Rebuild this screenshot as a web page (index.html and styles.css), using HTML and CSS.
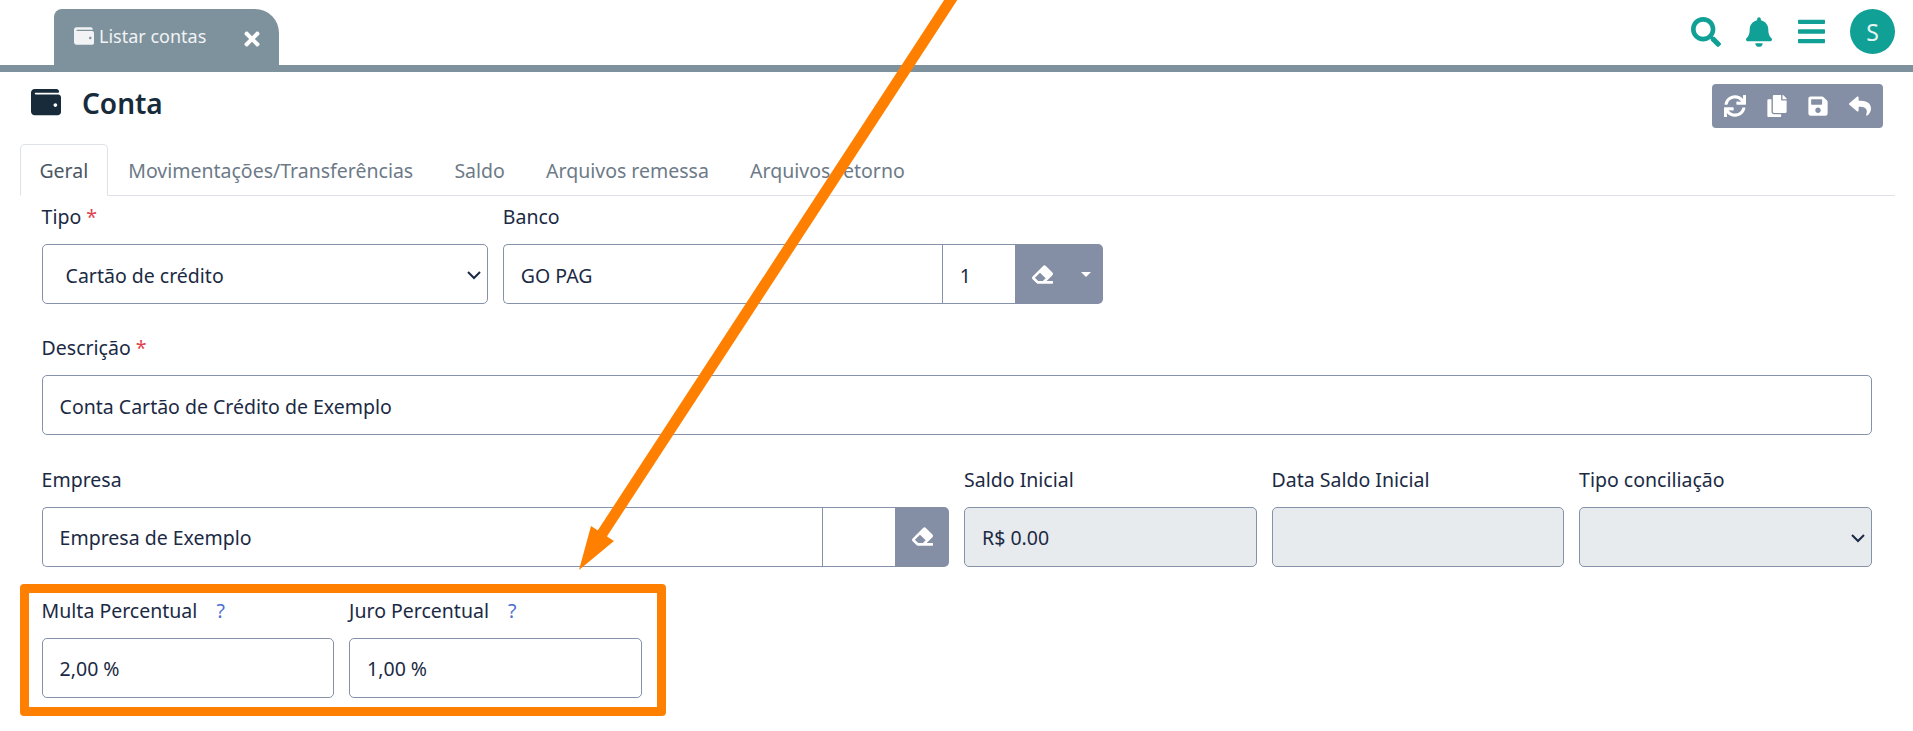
FILE: index.html
```html
<!DOCTYPE html>
<html lang="pt-BR">
<head>
<meta charset="utf-8"/>
<title>Conta</title>
<link rel="stylesheet" href="styles.css">
</head>
<body>
<svg class="sprite" width="0" height="0">
  <symbol id="i-wallet" viewBox="0 0 512 512"><path d="M461.2 128H80c-8.84 0-16-7.16-16-16s7.16-16 16-16h384c8.84 0 16-7.16 16-16 0-26.51-21.49-48-48-48H64C28.65 32 0 60.65 0 96v320c0 35.35 28.65 64 64 64h397.2c28.02 0 50.8-21.53 50.8-48V176c0-26.47-22.78-48-50.8-48zM416 340c-17.67 0-32-14.33-32-32s14.33-32 32-32 32 14.33 32 32-14.33 32-32 32z"/></symbol>
  <symbol id="i-times" viewBox="0 0 352 512"><path d="M242.72 256l100.07-100.07c12.28-12.28 12.28-32.19 0-44.48l-22.24-22.24c-12.28-12.28-32.19-12.28-44.48 0L176 189.28 75.93 89.21c-12.28-12.28-32.19-12.28-44.48 0L9.21 111.45c-12.28 12.28-12.28 32.19 0 44.48L109.28 256 9.21 356.07c-12.28 12.28-12.28 32.19 0 44.48l22.24 22.24c12.28 12.28 32.2 12.28 44.48 0L176 322.72l100.07 100.07c12.28 12.28 32.2 12.28 44.48 0l22.24-22.24c12.28-12.28 12.28-32.19 0-44.48L242.72 256z"/></symbol>
  <symbol id="i-search" viewBox="0 0 512 512"><path d="M505 442.7L405.3 343c-4.5-4.5-10.6-7-17-7H372c27.6-35.3 44-79.7 44-128C416 93.1 322.9 0 208 0S0 93.1 0 208s93.1 208 208 208c48.3 0 92.7-16.4 128-44v16.3c0 6.4 2.5 12.5 7 17l99.7 99.7c9.4 9.4 24.6 9.4 33.9 0l28.3-28.3c9.4-9.4 9.4-24.6.1-34zM208 336c-70.7 0-128-57.2-128-128 0-70.7 57.2-128 128-128 70.7 0 128 57.2 128 128 0 70.7-57.2 128-128 128z"/></symbol>
  <symbol id="i-bell" viewBox="0 0 448 512"><path d="M224 512c35.32 0 63.97-28.65 63.97-64H160.03c0 35.35 28.65 64 63.97 64zm215.39-149.71c-19.32-20.76-55.47-51.99-55.47-154.29 0-77.7-54.48-139.9-127.94-155.16V32c0-17.67-14.32-32-31.98-32s-31.98 14.33-31.98 32v20.84C118.56 68.1 64.08 130.3 64.08 208c0 102.3-36.15 133.53-55.47 154.29-6 6.45-8.66 14.16-8.61 21.71.11 16.4 12.98 32 32.1 32h383.8c19.12 0 32-15.6 32.1-32 .05-7.55-2.61-15.27-8.61-21.71z"/></symbol>
  <symbol id="i-bars" viewBox="0 0 448 512"><path d="M16 132h416c8.837 0 16-7.163 16-16V76c0-8.837-7.163-16-16-16H16C7.163 60 0 67.163 0 76v40c0 8.837 7.163 16 16 16zm0 160h416c8.837 0 16-7.163 16-16v-40c0-8.837-7.163-16-16-16H16c-8.837 0-16 7.163-16 16v40c0 8.837 7.163 16 16 16zm0 160h416c8.837 0 16-7.163 16-16v-40c0-8.837-7.163-16-16-16H16c-8.837 0-16 7.163-16 16v40c0 8.837 7.163 16 16 16z"/></symbol>
  <symbol id="i-sync" viewBox="0 0 512 512"><path d="M440.65 12.57l4 82.77A247.16 247.16 0 0 0 255.83 8C134.73 8 33.91 94.92 12.29 209.82A12 12 0 0 0 24.09 224h49.05a12 12 0 0 0 11.67-9.26 175.91 175.91 0 0 1 317-56.94l-101.46-4.86a12 12 0 0 0-12.57 12v47.41a12 12 0 0 0 12 12H500a12 12 0 0 0 12-12V12a12 12 0 0 0-12-12h-47.37a12 12 0 0 0-11.98 12.57zM255.83 432a175.61 175.61 0 0 1-146-77.8l101.8 4.87a12 12 0 0 0 12.57-12v-47.4a12 12 0 0 0-12-12H12a12 12 0 0 0-12 12V500a12 12 0 0 0 12 12h47.35a12 12 0 0 0 12-12.6l-4.15-82.57A247.17 247.17 0 0 0 255.83 504c121.11 0 221.93-86.92 243.55-201.82a12 12 0 0 0-11.8-14.18h-49.05a12 12 0 0 0-11.67 9.26A175.86 175.86 0 0 1 255.83 432z"/></symbol>
  <symbol id="i-copy" viewBox="0 0 448 512"><path d="M320 448v40c0 13.255-10.745 24-24 24H24c-13.255 0-24-10.745-24-24V120c0-13.255 10.745-24 24-24h72v296c0 30.879 25.121 56 56 56h168zm0-344V0H152c-13.255 0-24 10.745-24 24v368c0 13.255 10.745 24 24 24h272c13.255 0 24-10.745 24-24V128H344c-13.2 0-24-10.8-24-24zm120.971-31.029L375.029 7.029A24 24 0 0 0 358.059 0H352v96h96v-6.059a24 24 0 0 0-7.029-16.97z"/></symbol>
  <symbol id="i-save" viewBox="0 0 448 512"><path d="M433.941 129.941l-83.882-83.882A48 48 0 0 0 316.118 32H48C21.49 32 0 53.49 0 80v352c0 26.51 21.49 48 48 48h352c26.51 0 48-21.49 48-48V163.882a48 48 0 0 0-14.059-33.941zM224 416c-35.346 0-64-28.654-64-64 0-35.346 28.654-64 64-64s64 28.654 64 64c0 35.346-28.654 64-64 64zm96-304.52V212c0 6.627-5.373 12-12 12H76c-6.627 0-12-5.373-12-12V108c0-6.627 5.373-12 12-12h228.52c3.183 0 6.235 1.264 8.485 3.515l3.48 3.48A11.996 11.996 0 0 1 320 111.48z"/></symbol>
  <symbol id="i-reply" viewBox="0 0 512 512"><path d="M8.309 189.836L184.313 37.851C199.719 24.546 224 35.347 224 56.015v80.053c160.629 1.839 288 34.032 288 186.258 0 61.441-39.581 122.309-83.333 154.132-13.653 9.931-33.111-2.533-28.077-18.631 45.344-145.012-21.507-183.51-176.59-185.742V360c0 20.7-24.3 31.453-39.687 18.164l-176.004-152c-11.071-9.562-11.086-26.753 0-36.328z"/></symbol>
  <symbol id="i-eraser" viewBox="0 0 512 512"><path d="M497.941 273.941c18.745-18.745 18.745-49.137 0-67.882l-160-160c-18.745-18.745-49.136-18.746-67.883 0l-256 256c-18.745 18.745-18.745 49.137 0 67.882l96 96A48.004 48.004 0 0 0 144 480h356c6.627 0 12-5.373 12-12v-40c0-6.627-5.373-12-12-12H355.883l142.058-142.059zm-302.627-62.627l137.373 137.373L265.373 416H150.628l-80-80 124.686-124.686z"/></symbol>
</svg>

<header class="topbar">
  <div class="open-tab">
    <svg class="open-tab-icon"><use href="#i-wallet"/></svg>
    <span class="open-tab-label">Listar contas</span>
    <svg class="open-tab-close"><use href="#i-times"/></svg>
  </div>
  <nav class="top-actions">
    <svg class="ico-search"><use href="#i-search"/></svg>
    <svg class="ico-bell"><use href="#i-bell"/></svg>
    <svg class="ico-bars"><use href="#i-bars"/></svg>
    <span class="avatar">S</span>
  </nav>
</header>
<div class="topbar-line"></div>

<section class="page-head">
  <svg class="title-icon"><use href="#i-wallet"/></svg>
  <h1 class="title">Conta</h1>
  <div class="toolbar">
    <svg class="tool-sync"><use href="#i-sync"/></svg>
    <svg class="tool-copy"><use href="#i-copy"/></svg>
    <svg class="tool-save"><use href="#i-save"/></svg>
    <svg class="tool-reply"><use href="#i-reply"/></svg>
  </div>
</section>

<ul class="tabs">
  <li class="tab active">Geral</li>
  <li class="tab">Movimentações/Transferências</li>
  <li class="tab">Saldo</li>
  <li class="tab">Arquivos remessa</li>
  <li class="tab">Arquivos retorno</li>
</ul>

<form class="form">
  <div class="field span-3">
    <label class="lbl">Tipo <span class="req">*</span></label>
    <div class="ctl select">Cartão de crédito<svg class="chev" viewBox="0 0 16 16"><path d="M2 5l6 6 6-6"/></svg></div>
  </div>
  <div class="field span-4">
    <label class="lbl">Banco</label>
    <div class="group">
      <div class="ctl grow">GO PAG</div>
      <div class="ctl code-banco">1</div>
      <div class="addon addon-wide">
        <svg class="ico-eraser"><use href="#i-eraser"/></svg>
        <span class="caret"></span>
      </div>
    </div>
  </div>
  <div class="break"></div>

  <div class="field span-12">
    <label class="lbl">Descrição <span class="req">*</span></label>
    <div class="ctl">Conta Cartão de Crédito de Exemplo</div>
  </div>

  <div class="field span-6">
    <label class="lbl">Empresa</label>
    <div class="group">
      <div class="ctl grow">Empresa de Exemplo</div>
      <div class="ctl code-empresa"></div>
      <div class="addon">
        <svg class="ico-eraser"><use href="#i-eraser"/></svg>
      </div>
    </div>
  </div>
  <div class="field span-2">
    <label class="lbl">Saldo Inicial</label>
    <div class="ctl off">R$ 0.00</div>
  </div>
  <div class="field span-2">
    <label class="lbl">Data Saldo Inicial</label>
    <div class="ctl off"></div>
  </div>
  <div class="field span-2">
    <label class="lbl">Tipo conciliação</label>
    <div class="ctl off select"><svg class="chev" viewBox="0 0 16 16"><path d="M2 5l6 6 6-6"/></svg></div>
  </div>

  <div class="field span-2">
    <label class="lbl">Multa Percentual <span class="help">?</span></label>
    <div class="ctl">2,00 %</div>
  </div>
  <div class="field span-2">
    <label class="lbl">Juro Percentual <span class="help">?</span></label>
    <div class="ctl">1,00 %</div>
  </div>
</form>

<!-- annotation drawn over the screen -->
<div class="mark-box"></div>
<svg class="mark-arrow" viewBox="0 0 1913 731">
  <path class="mark-shaft" d="M954 -5L600 537"/>
  <path class="mark-head" d="M591 526L614 541L579 570Z"/>
</svg>
</body>
</html>
```

FILE: styles.css
```css
* {
  box-sizing: border-box;
}

html, body {
  margin: 0;
  height: 731px;
  overflow: hidden;
  background: #fff;
}

body {
  position: relative;
  font-family: "Noto Sans", "Open Sans", sans-serif;
  font-size: 19.5px;
  color: #1b2a44;
}

svg {
  display: block;
  fill: currentColor;
}

.sprite {
  position: absolute;
}

/* top bar */
.topbar {
  display: flex;
  align-items: flex-end;
  height: 65px;
  padding: 0 18px 0 54px;
}

.open-tab {
  display: flex;
  align-items: center;
  width: 225px;
  height: 56px;
  padding: 0 19px 0 20px;
  background: #7e929d;
  border-radius: 8px 24px 0 0;
  color: #f1f3f4;
}

.open-tab-icon {
  width: 20px;
  height: 20px;
  margin: -2px 5px 0 0;
}

.open-tab-label {
  margin-top: -2px;
  font-size: 18px;
}

.open-tab-close {
  width: 16px;
  height: 22px;
  margin: 4px 0 0 auto;
  color: #fff;
}

.top-actions {
  display: flex;
  align-items: center;
  align-self: flex-start;
  margin: 9px 0 0 auto;
  color: #11a095;
}

.ico-search {
  width: 30px;
  height: 30px;
  margin-right: 25px;
}

.ico-bell {
  width: 26px;
  height: 30px;
  margin-right: 26px;
}

.ico-bars {
  width: 27px;
  height: 31px;
  margin-right: 25px;
}

.avatar {
  display: flex;
  align-items: center;
  justify-content: center;
  width: 45px;
  height: 45px;
  border-radius: 50%;
  background: #11a095;
  color: #e6f5f3;
  font-size: 23px;
}

.topbar-line {
  height: 7px;
  background: #7e929d;
}

/* page title */
.page-head {
  display: flex;
  align-items: flex-start;
  height: 72px;
  padding: 12px 30px 0 31px;
}

.title-icon {
  width: 30px;
  height: 30px;
  margin: 3px 21px 0 0;
  color: #172b3a;
}

.title {
  margin: 0;
  font-size: 28px;
  line-height: 38px;
  font-weight: 600;
  color: #172b3a;
}

.toolbar {
  display: flex;
  align-items: center;
  gap: 21px;
  width: 171px;
  height: 44px;
  margin-left: auto;
  padding-left: 12px;
  background: #848fa5;
  border-radius: 4px;
  color: #fff;
}

.toolbar svg {
  height: 22px;
}

.tool-sync { width: 22px; }
.tool-copy { width: 20px; }
.tool-save { width: 20px; }
.tool-reply { width: 22px; }

/* tabs */
.tabs {
  display: flex;
  height: 52px;
  margin: 0 18px 0 20px;
  padding: 0;
  list-style: none;
  border-bottom: 1px solid #dee2e6;
}

.tab {
  height: 52px;
  padding: 0 19.6px;
  line-height: 52px;
  color: #6d7a88;
  border: 1px solid transparent;
  border-radius: 5px 5px 0 0;
}

.tab.active {
  padding: 0 18.4px;
  color: #4a5663;
  background: #fff;
  border-color: #dee2e6 #dee2e6 #fff;
}

/* form */
.form {
  display: grid;
  grid-template-columns: repeat(12, 1fr);
  column-gap: 15px;
  row-gap: 29.33px;
  width: 1830px;
  margin: 6px 0 0 41.6px;
}

.break { grid-column: span 5; }
.span-2 { grid-column: span 2; }
.span-3 { grid-column: span 3; }
.span-4 { grid-column: span 4; }
.span-6 { grid-column: span 6; }
.span-12 { grid-column: span 12; }

.lbl {
  display: block;
  height: 42px;
  line-height: 30px;
  white-space: pre-wrap;
}

.req {
  color: #e0434f;
}

.help {
  margin-left: 14px;
  color: #4a6fd0;
}

.ctl {
  display: flex;
  align-items: center;
  height: 60px;
  padding: 2px 17px 0;
  background: #fff;
  border: 1px solid #8592aa;
  border-radius: 5px;
}

.off {
  background: #e8ebee;
}

.select {
  padding-left: 23px;
  position: relative;
}

.chev {
  position: absolute;
  right: 5px;
  top: 22px;
  width: 16px;
  height: 16px;
  fill: none;
  stroke: #1b2a44;
  stroke-width: 2;
}

.group {
  display: flex;
  height: 60px;
}

.group .ctl {
  border-radius: 0;
  border-right: 0;
}

.group .grow {
  flex: 1;
  border-radius: 5px 0 0 5px;
}

.code-banco {
  width: 73px;
}

.code-empresa {
  width: 73px;
}

.addon {
  display: flex;
  align-items: center;
  justify-content: center;
  width: 54px;
  background: #848fa5;
  border-radius: 0 5px 5px 0;
  color: #fff;
}

.addon-wide {
  width: 88px;
  justify-content: flex-start;
  padding-left: 17px;
}

.ico-eraser {
  width: 21px;
  height: 21px;
}

.caret {
  margin-left: 28px;
  border-top: 5px solid #fff;
  border-left: 5px solid transparent;
  border-right: 5px solid transparent;
}

/* annotation */
.mark-box {
  position: absolute;
  left: 20px;
  top: 584px;
  width: 646px;
  height: 132px;
  border: 9px solid #ff8000;
  border-radius: 4px;
}

.mark-arrow {
  position: absolute;
  left: 0;
  top: 0;
  width: 1913px;
  height: 731px;
}

.mark-shaft {
  fill: none;
  stroke: #ff8000;
  stroke-width: 11;
}

.mark-head {
  fill: #ff8000;
}
```
